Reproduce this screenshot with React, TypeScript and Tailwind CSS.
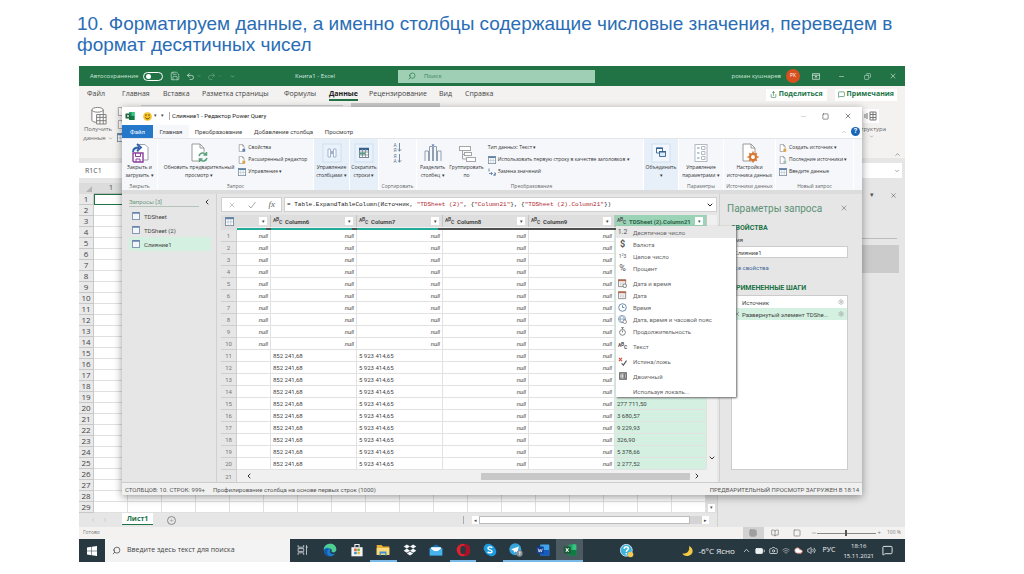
import React from 'react';
import {
  Battery, ChevronDown, ChevronLeft, ChevronRight, ChevronUp, Cloud, Camera, Minus, MessageSquare,
  Redo2, Save, Search, Settings, Share, Square, Undo2, Volume2, Wifi, X, Copy, Grid3x3, BookOpen,
} from 'lucide-react';

const excelTabs = [
  { label: 'Файл', width: 'w-[35px]' },
  { label: 'Главная', width: 'w-[41px]' },
  { label: 'Вставка', width: 'w-[39px]' },
  { label: 'Разметка страницы', width: 'w-[82px]' },
  { label: 'Формулы', width: 'w-[45px]' },
  { label: 'Данные', width: 'w-[40px]' },
  { label: 'Рецензирование', width: 'w-[70px]' },
  { label: 'Вид', width: 'w-[26px]' },
  { label: 'Справка', width: 'w-[42px]' },
];

const queries = ['TDSheet', 'TDSheet (2)', 'Слияние1'];

const columns = ['', 'Column6', 'Column7', 'Column8', 'Column9', 'TDSheet (2).Column21'];

const lastValues: Record<number, string> = {
  15: '277 711,50',
  16: '3 680,57',
  17: '9 229,93',
  18: '326,90',
  19: '5 378,66',
  20: '2 277,52',
};

const rowNumbers = Array.from({ length: 20 }, (_, i) => i + 1);
const sheetRows = Array.from({ length: 29 }, (_, i) => i + 1);
const sheetColumns = Array.from({ length: 18 }, (_, i) => i + 1);

function TableIcon({ className = '' }: { className?: string }) {
  return (
    <svg viewBox="0 0 10 10" className={`shrink-0 ${className}`} fill="none">
      <rect x="0.5" y="0.5" width="9" height="9" fill="#fff" stroke="#7b8b9c" />
      <path d="M0.5 1.5h9" stroke="#5f82a8" strokeWidth="2" />
      <path d="M3.5 2.5v7M6.5 2.5v7M1 5.5h8" stroke="#a9b9c9" strokeWidth="0.7" />
    </svg>
  );
}

function QueryIcon() {
  return (
    <svg viewBox="0 0 8 8" className="size-2 shrink-0" fill="none">
      <rect x="0.5" y="0.5" width="7" height="7" fill="#f2f5f9" stroke="#8699b3" />
      <path d="M0.5 1h7" stroke="#5c7ba6" strokeWidth="1.4" />
    </svg>
  );
}

function PageIcon({ accent = '#e0a33a', className = '' }: { accent?: string; className?: string }) {
  return (
    <svg viewBox="0 0 10 10" className={`shrink-0 ${className}`} fill="none">
      <path d="M1.5 0.5h4l2 2v7h-6z" fill="#fff" stroke="#8a8a8a" strokeWidth="0.8" />
      <path d="M5.5 0.5v2h2" stroke="#8a8a8a" strokeWidth="0.8" />
      <rect x="5.5" y="6" width="3.5" height="3.5" fill={accent} />
    </svg>
  );
}

function TypeIcon() {
  return (
    <span aria-hidden="true" className="relative inline-block h-2 w-[9px] text-[5px] leading-[6px] font-bold text-[#555]">
      <span className="absolute top-0 left-0">A</span>
      <span className="absolute -top-px left-[3px]">B</span>
      <span className="absolute top-[2px] left-[6px]">C</span>
    </span>
  );
}

function CloseLoadIcon() {
  return (
    <svg viewBox="0 0 20 20" className="size-5" fill="none">
      <path d="M8 1.500h7l3 3V17H8z" fill="#fff" stroke="#9aa3ad" />
      <path d="M3 9c0-3 2-4.500 6-4.500M7 1l4 3.500L7 8" stroke="#2f5ea8" strokeWidth="1.800" />
      <path d="M3 10h10v9H4l-1-1z" fill="#fff" stroke="#8a3f9a" strokeWidth="1.400" />
      <path d="M5.500 10v3.500h5V10M6 19v-3h4v3" stroke="#8a3f9a" />
    </svg>
  );
}

function RefreshPageIcon() {
  return (
    <svg viewBox="0 0 20 20" className="size-5" fill="none">
      <path d="M3 1h8l4 4v13H3z" fill="#fff" stroke="#9a9a9a" />
      <path d="M11 1v4h4" stroke="#9a9a9a" />
      <circle cx="14" cy="14" r="5.500" fill="#f5f7fa" />
      <path d="M10 13a4 4 0 0 1 7-1.500M18 15a4 4 0 0 1-7 1.500M17.500 9v3h-3M10.500 19v-3h3" stroke="#5ba17c" strokeWidth="1.500" />
    </svg>
  );
}

function ManageColumnsIcon() {
  return (
    <svg viewBox="0 0 20 20" className="size-5" fill="none">
      <rect x="1" y="1" width="18" height="18" fill="#e9f1fa" stroke="#cfdff0" />
      <path d="M6 6h2.500v8H6zM11.500 6H14v8h-2.500z" fill="#fff" stroke="#9fb3ce" />
      <path d="M8.500 8h3v3h-3z" fill="#9fb3ce" />
    </svg>
  );
}

function ReduceRowsIcon() {
  return (
    <svg viewBox="0 0 20 20" className="size-5" fill="none">
      <rect x="1" y="1" width="18" height="18" fill="#e9f1fa" stroke="#cfdff0" />
      <rect x="5.500" y="5.500" width="9" height="9" fill="#fff" stroke="#7b8794" />
      <path d="M5 6h10" stroke="#35618f" strokeWidth="2.500" />
      <path d="M5.500 9h9M5.500 12h9M8.500 6v8M11.500 6v8" stroke="#7b8794" strokeWidth="0.800" />
      <path d="M6 9.500h5v2H6z" fill="#4da07a" />
    </svg>
  );
}

function SortIcon({ letters }: { letters: string }) {
  return (
    <span className="flex h-[11px] items-center text-[#5b7290]">
      <span className="flex flex-col text-[5px] leading-[5px]">
        <span>{letters[0]}</span>
        <span>{letters[1]}</span>
      </span>
      <svg viewBox="0 0 5 10" className="h-[9px] w-[5px]" fill="none" stroke="currentColor" strokeWidth="0.900">
        <path d="M2.500 0v9M0.500 7l2 2 2-2" />
      </svg>
    </span>
  );
}

function SplitIcon() {
  return (
    <svg viewBox="0 0 20 20" className="size-5" fill="none" stroke="#8fa0b3">
      <path d="M2 18V8h3.500v10M14.500 18V8H18v10M6.500 18V3.500h3V18M10.500 18V3.500h3V18" />
      <path d="M8.500 1.500L10 3.500l1.500-2z" fill="#3d6ea8" stroke="none" />
    </svg>
  );
}

function GroupIcon() {
  return (
    <svg viewBox="0 0 20 20" className="size-5" fill="#fff" stroke="#a6a6a6">
      <path d="M5.500 7v9H10M5.500 11.500H8" fill="none" />
      <rect x="2.500" y="3.500" width="11" height="4" />
      <rect x="7.500" y="9.500" width="7" height="3" />
      <rect x="9.500" y="14.500" width="9" height="4" />
    </svg>
  );
}

function CombineIcon() {
  return (
    <svg viewBox="0 0 20 20" className="size-5" fill="none">
      <rect x="1" y="1" width="18" height="18" fill="#f1f7fd" stroke="#cfdff0" />
      <path d="M5.500 5h6v5h-6z" fill="#fff" stroke="#4b7099" />
      <path d="M5 5.300h7" stroke="#35618f" strokeWidth="1.400" />
      <path d="M8.500 8.500h6v5h-6z" fill="#dcebf7" stroke="#4b7099" />
      <path d="M8 8.800h7" stroke="#35618f" strokeWidth="1.400" />
    </svg>
  );
}

function ParametersIcon() {
  return (
    <svg viewBox="0 0 20 20" className="size-5" fill="#fff" stroke="#b3bac2">
      <rect x="4" y="1.500" width="12" height="17" />
      <path d="M6 5h2.500M6 10h2.500M6 15h2.500" stroke="#6b8fb8" />
      <path d="M10.500 3.500h3.500v3h-3.500zM10.500 8.500h3.500v3h-3.500zM10.500 13.500h3.500v3h-3.500z" />
    </svg>
  );
}

function SourceSettingsIcon() {
  return (
    <svg viewBox="0 0 20 20" className="size-5" fill="none">
      <path d="M4 1h8l4 4v13H4z" fill="#fff" stroke="#9a9a9a" />
      <path d="M12 1v4h4" stroke="#9a9a9a" />
      <circle cx="14" cy="14" r="3" fill="#fff" stroke="#d8742c" strokeWidth="2" />
      <path d="M14 8.500v2M14 17.500v2M8.500 14h2M17.500 14h2M10.200 10.200l1.400 1.400M16.400 16.400l1.400 1.400M10.200 17.800l1.400-1.400M16.400 11.600l1.400-1.400" stroke="#d8742c" strokeWidth="1.500" />
    </svg>
  );
}

function ExcelLogo({ className = '' }: { className?: string }) {
  return (
    <svg viewBox="0 0 20 20" className={className} fill="none">
      <rect x="8" y="2" width="11" height="16" rx="1" fill="#21a366" />
      <path d="M13.500 2H19v8h-5.500z" fill="#33c481" />
      <path d="M8 10h11v8H8z" fill="#107c41" />
      <rect x="1" y="5" width="10" height="10" rx="1" fill="#185c37" />
      <path d="M4 7.500l4 5M8 7.500l-4 5" stroke="#fff" strokeWidth="1.500" />
    </svg>
  );
}

interface BigButtonProps {
  icon: React.ReactNode;
  lines: string[];
}

function BigButton({ icon, lines }: BigButtonProps) {
  return (
    <button className="flex h-10 flex-col items-center pt-px leading-2 whitespace-nowrap">
      {icon}
      {lines.map((line) => (
        <span key={line}>{line}</span>
      ))}
    </button>
  );
}

function SmallButton({ icon, label }: { icon?: React.ReactNode; label: string }) {
  return (
    <button className="flex h-3 items-center gap-[2px] whitespace-nowrap">
      {icon}
      {label}
    </button>
  );
}

interface GroupProps {
  label?: string;
  className: string;
  children: React.ReactNode;
}

function Group({ label, className, children }: GroupProps) {
  return (
    <div className={`flex h-full flex-col border-r border-white pt-[3px] ${className}`}>
      <div className="flex h-10 items-start justify-center gap-1">{children}</div>
      <div className="text-center leading-2 whitespace-nowrap text-[#666]">{label}</div>
    </div>
  );
}

function ExcelHeader() {
  return (
    <>
      <header className="flex h-5 items-center bg-[#217346] text-[6px] text-[#cfe5d8]">
        <label htmlFor="autosave" className="ml-[11px] w-[50px]">Автосохранение</label>
        <span className="relative ml-[3px] flex">
          <input id="autosave" type="checkbox" className="h-[9px] w-5 appearance-none rounded-full border border-white" />
          <span className="pointer-events-none absolute top-[2px] left-[3px] size-[5px] rounded-full bg-white" />
        </span>
        <Save className="ml-[7px] size-[10px]" strokeWidth={1.5} />
        <Undo2 className="ml-[6px] size-[9px]" />
        <ChevronDown className="ml-[2px] size-1" />
        <Redo2 className="ml-[6px] size-[9px] opacity-40" />
        <ChevronDown className="ml-[2px] size-1 opacity-50" />
        <ChevronDown className="ml-2 size-[5px]" />
        <h2 className="ml-[60px] w-[103px] text-[#dcece3]">Книга1 - Excel</h2>
        <label className="flex h-[13px] w-[197px] items-center bg-[#9fd0b5] pl-[10px] text-[#217346]">
          <Search className="size-2 -scale-x-100" />
          <input aria-label="Поиск" placeholder="Поиск" className="ml-2 w-20 placeholder:text-[#3c7f5b]" />
        </label>
        <span className="ml-auto">роман кушнарев</span>
        <span className="ml-[5px] grid size-[14px] place-items-center rounded-full bg-[#d8501f] text-[5px] text-white">РК</span>
        <div className="ml-3 flex w-[93px] items-center justify-between pr-2">
          <svg viewBox="0 0 10 8" className="h-[7px] w-2" fill="none" stroke="currentColor">
            <path d="M0.500 0.500h9v7h-9zM0.500 2.500h9M5 6.500v-3M3.500 5L5 3.500 6.500 5" />
          </svg>
          <Minus className="size-[7px]" />
          <Copy className="size-[7px] -scale-x-100" />
          <X className="size-2" />
        </div>
      </header>
      <nav className="flex h-[17px] items-center bg-[#f3f2f1] pl-2 text-[7px] text-[#444]">
        {excelTabs.map((tab) => (
          <button key={tab.label} className={`h-full shrink-0 text-left whitespace-nowrap ${tab.width}`}>
            <span className={tab.label === 'Данные' ? 'border-b-2 border-[#217346] pb-px font-bold text-[#222]' : ''}>
              {tab.label}
            </span>
          </button>
        ))}
        <button className="ml-auto flex h-3 items-center gap-[2px] bg-white px-1 font-bold text-[#217346]">
          <Share className="size-[7px]" />
          Поделиться
        </button>
        <button className="mx-2 flex h-3 items-center gap-[2px] bg-white px-[3px] font-bold text-[#217346]">
          <MessageSquare className="size-[7px]" />
          Примечания
        </button>
      </nav>
      <div className="flex h-[55px] items-start bg-[#f3f2f1] text-[6px] text-[#666]">
        <button className="mt-[3px] flex w-[38px] flex-col items-center leading-[9px]">
          <svg viewBox="0 0 18 20" className="h-[19px] w-[17px]" fill="#fff" stroke="#777">
            <path d="M2 4v11c0 3 12 3 12 0V4" />
            <ellipse cx="8" cy="4" rx="6" ry="2.500" />
            <path d="M7 9h10v10H7zM7 12h10M7 15.500h10M10.500 9v10M14 9v10" />
          </svg>
          Получить
          <span className="flex items-center">данные <ChevronDown className="ml-[2px] size-[5px]" /></span>
        </button>
        <div className="flex flex-col gap-1 pt-1">
          <PageIcon className="size-[9px]" accent="#fff" />
          <PageIcon className="size-[9px]" accent="#3f86c0" />
          <TableIcon className="size-[9px]" />
        </div>
        <div className="ml-[15px] h-[3px] w-[202px] border-b border-[#ccc]" />
        <div className="ml-2 h-[5px] w-[89px] bg-[#c9c9c9]" />
        <button className="mt-[6px] ml-auto flex flex-col items-center">
          <svg viewBox="0 0 16 14" className="h-[14px] w-4 bg-white" fill="none" stroke="#777">
            <path d="M7 3h6v8H7zM7 5.500h6M7 8.500h6M10 3v8M2 5v4M4 4v6" />
          </svg>
          <span className="mt-[2px]">Структура</span>
          <ChevronDown className="size-[5px]" />
        </button>
        <ChevronUp className="mr-1 ml-2 size-[7px] self-end" />
      </div>
      <div className="flex h-[25px] items-center gap-[70px] bg-[#e6e6e6] text-[7px] text-[#555]">
        <input aria-label="Имя ячейки" defaultValue="R1C1" className="h-[15px] w-14 bg-white pl-[6px]" />
        <div className="mr-[3px] flex h-[15px] flex-1 items-center justify-end bg-white pr-[2px]">
          <ChevronDown className="size-[6px]" />
        </div>
      </div>
    </>
  );
}

function Sheet() {
  return (
    <div className="flex flex-1 bg-[#e6e6e6]">
      <div className="min-w-0 flex-1">
        <div className="flex">
          <div className="min-w-0 flex-1">
            <table className="w-full table-fixed border-separate border-spacing-0 bg-white text-[8px] leading-[10px] text-[#444]">
              <thead>
                <tr className="bg-[#dcdcdc]">
                  <th className="h-[11px] w-[15px] p-0">
                    <svg viewBox="0 0 6 6" className="ml-auto mr-[2px] size-[6px]"><path d="M6 0v6H0z" fill="#b5b5b5" /></svg>
                  </th>
                  {sheetColumns.map((n) => (
                    <th key={n} className="border-b border-[#bbb] p-0 text-[7px] font-normal">{n === 1 && n}</th>
                  ))}
                </tr>
              </thead>
              <tbody>
                {sheetRows.map((n) => (
                  <tr key={n}>
                    <td className="h-[11px] border-r border-b border-[#c8c8c8] bg-[#e9e9e9] p-0 text-center">{n}</td>
                    {sheetColumns.map((c) => (
                      <td key={c} className={n === 1 && c === 1 ? 'border border-[#217346] p-0' : 'border-r border-b border-[#e0e0e0] p-0'} />
                    ))}
                  </tr>
                ))}
              </tbody>
            </table>
          </div>
          <div className="flex w-[11px] flex-col justify-end bg-[#dedede]">
            <button aria-label="Вниз" className="mx-[2px] mb-px grid h-2 place-items-center bg-white text-[5px] text-[#555]">▾</button>
          </div>
        </div>
        <div className="flex h-[14px] items-center text-[7px] text-[#999]">
          <ChevronLeft className="ml-[11px] size-[6px] opacity-60" />
          <ChevronRight className="ml-[6px] size-[6px] opacity-60" />
          <button className="ml-[14px] h-3 w-[31px] self-start border-b border-[#217346] bg-white leading-3 font-bold text-[#217346]">Лист1</button>
          <button aria-label="Новый лист" className="ml-[14px] grid size-[9px] place-items-center rounded-full border border-[#888] text-[7px] leading-[7px]">+</button>
          <span className="ml-auto h-2 border-l border-[#aaa]" />
          <div className="mr-2 ml-2 flex h-2 w-[237px] items-center justify-between bg-[#d4d4d4] text-[5px] text-[#444]">
            <span className="h-2 w-[7px] bg-white text-center leading-2">◂</span>
            <span className="mr-3 h-2 flex-1 border border-[#bbb] bg-white" />
            <span className="h-2 w-[7px] bg-white text-center leading-2">▸</span>
          </div>
        </div>
      </div>
      <aside className="w-[188px] border-l border-[#d0d0d0]">
        <div className="flex h-6 items-center justify-end gap-4 pr-2 text-[#555]">
          <span className="text-[7px]">▾</span>
          <X className="size-[7px]" />
        </div>
        <div className="mr-2 h-8 border-b border-[#bbb]" />
        <div className="mt-[6px] mr-[6px] h-7 bg-[#cbcbcb]" />
      </aside>
    </div>
  );
}

function PowerQueryRibbon() {
  return (
    <div className="flex h-[52px] border-t border-[#e3e7ec] bg-[#f5f7fa] font-['Open_Sans',sans-serif] text-[5px] text-[#333]">
      <Group label="Закрыть" className="w-9">
        <BigButton icon={<CloseLoadIcon />} lines={['Закрыть и', 'загрузить ▾']} />
      </Group>
      <Group label="Запрос" className="w-[156px]">
        <BigButton icon={<RefreshPageIcon />} lines={['Обновить предварительный', 'просмотр ▾']} />
        <div>
          <SmallButton icon={<PageIcon accent="#5b82ad" className="size-2" />} label="Свойства" />
          <SmallButton icon={<PageIcon className="size-2" />} label="Расширенный редактор" />
          <SmallButton icon={<TableIcon className="size-2" />} label="Управление ▾" />
        </div>
      </Group>
      <Group className="w-9 bg-[#e7eff8]">
        <BigButton icon={<ManageColumnsIcon />} lines={['Управление', 'столбцами ▾']} />
      </Group>
      <Group className="w-[29px] bg-[#e7eff8]">
        <BigButton icon={<ReduceRowsIcon />} lines={['Сократить', 'строки ▾']} />
      </Group>
      <Group label="Сортировать" className="w-[38px]">
        <div className="flex flex-col">
          <SortIcon letters="АЯ" />
          <SortIcon letters="ЯА" />
        </div>
      </Group>
      <Group label="Преобразование" className="flex-1 pl-[3px]">
        <BigButton icon={<SplitIcon />} lines={['Разделить', 'столбец ▾']} />
        <BigButton icon={<GroupIcon />} lines={['Группировать', 'по']} />
        <div className="flex-1">
          <SmallButton label="Тип данных: Текст ▾" />
          <SmallButton icon={<TableIcon className="size-2" />} label="Использовать первую строку в качестве заголовков ▾" />
          <SmallButton
            icon={
              <svg viewBox="0 0 8 8" className="size-2" fill="none" stroke="#4b7099">
                <path d="M1 0.500v3M1 5.500h3M3 4l1.500 1.500L3 7M6 5h1.500v1.500H6V8h2" strokeWidth="0.800" />
              </svg>
            }
            label="Замена значений"
          />
        </div>
      </Group>
      <Group className="w-[35px] bg-[#e7eff8]">
        <BigButton icon={<CombineIcon />} lines={['Объединить', '▾']} />
      </Group>
      <Group label="Параметры" className="w-[45px]">
        <BigButton icon={<ParametersIcon />} lines={['Управление', 'параметрами ▾']} />
      </Group>
      <Group label="Источники данных" className="w-[52px]">
        <BigButton icon={<SourceSettingsIcon />} lines={['Настройки', 'источника данных']} />
      </Group>
      <Group label="Новый запрос" className="mr-2 w-[78px]">
        <div className="flex-1 pl-[3px]">
          <SmallButton icon={<PageIcon className="size-2" />} label="Создать источник ▾" />
          <SmallButton icon={<PageIcon accent="#9ec3b0" className="size-2" />} label="Последние источники ▾" />
          <SmallButton icon={<TableIcon className="size-2" />} label="Введите данные" />
        </div>
      </Group>
    </div>
  );
}

function CalendarIcon({ clock = false }: { clock?: boolean }) {
  return (
    <svg viewBox="0 0 10 10" className="size-[9px]" fill="none">
      <path d="M0.500 1h8v7.500h-8z" fill="#fff" stroke="#888" />
      <path d="M0 1.500h9" stroke="#b0694f" strokeWidth="2" />
      <path d="M2 4.500h5M2 6.500h5" stroke="#888" strokeDasharray="1 1" />
      {clock && <circle cx="7.500" cy="7.500" r="2" fill="#fff" stroke="#777" />}
    </svg>
  );
}

const typeMenu: { label: string; icon: React.ReactNode; separated?: boolean }[] = [
  { label: 'Десятичное число', icon: <span className="text-[7px]">1.2</span> },
  { label: 'Валюта', icon: <b className="text-[9px]">$</b> },
  { label: 'Целое число', icon: <span className="text-[5px]">1<sup>2</sup>3</span> },
  { label: 'Процент', icon: <span className="text-[9px]">%</span> },
  { label: 'Дата и время', icon: <CalendarIcon clock />, separated: true },
  { label: 'Дата', icon: <CalendarIcon /> },
  {
    label: 'Время',
    icon: (
      <svg viewBox="0 0 10 10" className="size-[9px]" fill="#fff" stroke="#5f81a5">
        <circle cx="5" cy="5" r="4.200" />
        <path d="M5 2.500V5h2" />
      </svg>
    ),
  },
  {
    label: 'Дата, время и часовой пояс',
    icon: (
      <svg viewBox="0 0 10 10" className="size-[9px]" fill="none" stroke="#6f8eae" strokeWidth="0.800">
        <circle cx="4.500" cy="4.500" r="4" />
        <path d="M0.500 4.500h8M4.500 0.500c-3 2-3 6 0 8M4.500 0.500c3 2 3 6 0 8" />
        <circle cx="7.500" cy="7.500" r="2" fill="#fff" stroke="#777" />
      </svg>
    ),
  },
  {
    label: 'Продолжительность',
    icon: (
      <svg viewBox="0 0 10 10" className="size-[9px]" fill="none" stroke="#777">
        <circle cx="5" cy="6" r="3.200" />
        <path d="M5 6V4M5 2.500V1M3.500 0.700h3" />
      </svg>
    ),
  },
  { label: 'Текст', icon: <TypeIcon />, separated: true },
  {
    label: 'Истина/ложь',
    separated: true,
    icon: (
      <svg viewBox="0 0 10 10" className="size-[9px]" fill="none" strokeWidth="1.300">
        <path d="M1 1l3.500 3.500M4.500 1L1 4.500" stroke="#d0503a" />
        <path d="M4 7l2 2 3.500-5" stroke="#555" />
      </svg>
    ),
  },
  {
    label: 'Двоичный',
    separated: true,
    icon: (
      <svg viewBox="0 0 10 10" className="size-2" fill="#eee" stroke="#555">
        <path d="M1 1h8v8H1z" strokeWidth="1.500" />
        <path d="M3.500 2.500v2M3.500 5.500v2M6 2.500h1v2H6zM6 5.500h1v2H6z" />
      </svg>
    ),
  },
  { label: 'Используя локаль...', icon: null, separated: true },
];

function TypeMenu() {
  return (
    <ul className="absolute top-[11px] left-[395px] z-10 w-[120px] bg-white text-[6px] text-[#666] shadow-[1px_1px_2px_#666]">
      {typeMenu.map((item, i) => (
        <li key={item.label} className={item.separated ? 'pt-[3px]' : ''}>
          <button className={`flex h-3 w-full items-center whitespace-nowrap ${i === 0 ? 'bg-[#e8e8e8]' : ''}`}>
            <span className="grid w-[13px] place-items-center leading-[9px] text-[#555]">{item.icon}</span>
            <span className="ml-1">{item.label}</span>
          </button>
        </li>
      ))}
    </ul>
  );
}

function cellText(row: number, column: number) {
  if (column === 5) return lastValues[row] ?? '';
  if (column > 2 || row <= 10) return 'null';
  return ['', '852 241,68', '5 923 414,65'][column];
}

function DataGrid() {
  return (
    <div className="relative flex flex-1 bg-[#f0f0f0]">
      <table className="flex-1 table-fixed border-separate border-spacing-0 text-[6px] leading-[11px] text-[#444]">
        <colgroup>
          <col className="w-4" />
          <col className="w-[34px]" />
          <col className="w-[86px]" />
          <col className="w-[86px]" />
          <col className="w-[86px]" />
          <col className="w-[86px]" />
          <col />
        </colgroup>
        <thead>
          <tr className="bg-[#dedede]">
            <th className="h-3 p-0"><TableIcon className="mx-auto size-[9px]" /></th>
            {columns.map((name, i) => (
              <th key={name} className={`border-r border-[#c4c4c4] p-0 font-bold ${i === 5 ? 'bg-[#9bd3b6] text-[#2d6349]' : ''}`}>
                <div className="flex items-center pr-[3px] pl-[2px] whitespace-nowrap">
                  {name && <TypeIcon />}
                  <span className="ml-[3px]">{name}</span>
                  <button aria-label={`Фильтр ${name}`} className="ml-auto size-2 bg-white text-[5px] leading-2 font-normal">▾</button>
                </div>
              </th>
            ))}
          </tr>
          <tr>
            <td className="h-[3px] bg-[#dedede] p-0" />
            {columns.map((name, i) => (
              <td key={name} className="bg-[#f0f0f0] p-0">
                <div className={`flex h-[2px] justify-end ${i < 3 ? 'bg-[#21ab98]' : 'bg-[#505050]'}`}>
                  <span className="w-[5px] bg-[#505050]" />
                </div>
              </td>
            ))}
          </tr>
        </thead>
        <tbody>
          {rowNumbers.map((row) => (
            <tr key={row} className="bg-white">
              <td className="h-3 border-r border-b border-[#cfcfcf] bg-[#e6e6e6] p-0 text-center text-[#777]">{row}</td>
              {columns.map((name, i) => {
                const text = cellText(row, i);
                return (
                  <td
                    key={name}
                    className={`border-r border-b border-[#e2e2e2] px-[2px] py-0 ${text === 'null' ? 'text-right italic' : ''} ${i === 5 ? 'bg-[#d3f0e1]' : ''}`}
                  >
                    {text}
                  </td>
                );
              })}
            </tr>
          ))}
          <tr>
            <td className="h-3 border-r border-[#cfcfcf] bg-[#e6e6e6] p-0 text-center text-[#777]">21</td>
            <td colSpan={6} className="p-0">
              <div className="flex h-[10px] items-center pr-[6px] pl-2 text-[#333]">
                <ChevronLeft className="size-2" strokeWidth={3} />
                <span className="ml-auto h-[7px] w-[209px] bg-[#c8c8c8]" />
                <ChevronRight className="ml-[3px] size-2" strokeWidth={3} />
              </div>
            </td>
          </tr>
        </tbody>
      </table>
      <div className="flex w-[10px] flex-col items-center justify-end pb-5">
        <ChevronDown className="size-2 text-[#333]" strokeWidth={3} />
      </div>
      <TypeMenu />
    </div>
  );
}

function PowerQueryWindow() {
  return (
    <section className="absolute inset-x-[43px] top-[41px] flex h-[388px] flex-col bg-[#e6e6e6] font-[Roboto,sans-serif] text-[6px] text-[#444] shadow-[0_2px_8px_#0006]">
      <div className="flex h-[18px] items-center bg-white pl-[3px]">
        <ExcelLogo className="size-[10px]" />
        <svg viewBox="0 0 10 10" className="ml-2 size-[9px]">
          <circle cx="5" cy="5" r="4.800" fill="#f5c32c" />
          <path d="M3.300 2.500v2M6.700 2.500v2M2.500 6c1 2.200 4 2.200 5 0" stroke="#5b4100" fill="none" />
        </svg>
        <span className="ml-[2px] text-[5px]">▾</span>
        <span className="ml-1 text-[5px]">▾</span>
        <h2 className="ml-[5px] border-l border-[#aaa] pl-[2px] leading-2 text-[#222]">Слияние1 - Редактор Power Query</h2>
        <div className="ml-auto flex w-[62px] items-center justify-between pr-[10px]">
          <Minus className="size-[7px] text-[#bbb]" />
          <Square className="size-[7px]" />
          <X className="size-2" />
        </div>
      </div>
      <div className="flex h-[13px] items-center bg-white">
        <button className="h-full w-[31px] bg-[#2477c9] text-white">Файл</button>
        <button className="h-full w-9 bg-[#f5f7fa]">Главная</button>
        <button className="w-[59px]">Преобразование</button>
        <button className="w-[71px]">Добавление столбца</button>
        <button className="w-10">Просмотр</button>
        <ChevronUp className="ml-auto size-[6px] text-[#999]" />
        <button className="mr-[2px] ml-1 size-[9px] rounded-full bg-[#1766b8] text-[7px] leading-[9px] font-bold text-white">?</button>
      </div>
      <PowerQueryRibbon />
      <div className="flex flex-1 border-t-4 border-[#dcdcdc]">
        <aside className="w-[95px] border-r border-[#d0d0d0] pt-1 pr-[5px] pl-[7px]">
          <h3 className="flex h-2 items-center justify-between text-[6px] text-[#6c9a82]">
            <span className="w-[70px] border-b border-[#b5c4bb] leading-2">Запросы [3]</span>
            <ChevronLeft className="size-2 text-[#333]" strokeWidth={3} />
          </h3>
          <ul className="mt-[3px]">
            {queries.map((query) => (
              <li key={query} className={query === 'Слияние1' ? 'bg-[#d3f0e1]' : ''}>
                <button className="flex h-[14px] items-center gap-1 pl-[3px]">
                  <QueryIcon />
                  {query}
                </button>
              </li>
            ))}
          </ul>
        </aside>
        <div className="ml-1 flex min-w-0 flex-1 flex-col">
          <div className="flex h-[21px] items-center gap-[2px]">
            <div className="flex h-[15px] w-[61px] items-center justify-around border border-[#d0d0d0] bg-white text-[#aaa]">
              <X className="size-2" />
              <svg viewBox="0 0 8 8" className="size-2" fill="none" stroke="currentColor"><path d="M0.500 4.500l2.500 2.500L7.500 1" /></svg>
              <i className="font-[Liberation_Serif,serif] text-[9px] text-[#666]">fx</i>
            </div>
            <div className="flex h-[15px] flex-1 items-center border border-[#d0d0d0] bg-white px-[2px] font-[Liberation_Mono,monospace] whitespace-nowrap text-[#222]">
              <div role="textbox" aria-label="Формула" contentEditable suppressContentEditableWarning>
                = Table.ExpandTableColumn(Источник, <span className="text-[#b0282e]">"TDSheet (2)"</span>, {'{'}
                <span className="text-[#b0282e]">"Column21"</span>{'}'}, {'{'}
                <span className="text-[#b0282e]">"TDSheet (2).Column21"</span>{'})'}
              </div>
              <ChevronDown className="ml-auto size-2" strokeWidth={3} />
            </div>
          </div>
          <DataGrid />
        </div>
        <aside className="ml-[2px] flex w-[143px] flex-col border-l border-[#d0d0d0] pr-[14px] pl-[7px]">
          <div className="flex h-7 items-center justify-between text-[10px] text-[#5c9177]">
            Параметры запроса
            <X className="size-2 text-[#777]" />
          </div>
          <div className="flex flex-1 flex-col pb-3 pl-1">
            <h3 className="text-[7px] leading-3 font-bold text-[#217346]">СВОЙСТВА</h3>
            <label htmlFor="query-name" className="leading-3">Имя</label>
            <input id="query-name" defaultValue="Слияние1" className="h-3 border border-[#ccc] bg-white px-[2px]" />
            <a href="#properties" className="mt-1 leading-3 text-[#44699c]">Все свойства</a>
            <h3 className="mt-2 mb-px text-[7px] leading-3 font-bold text-[#217346]">ПРИМЕНЕННЫЕ ШАГИ</h3>
            <ul className="flex-1 border border-[#ccc] bg-white">
              <li className="flex h-3 items-center justify-between pr-[3px] pl-[10px]">
                Источник
                <Settings className="size-[6px] text-[#999]" />
              </li>
              <li className="flex h-3 items-center bg-[#d3f0e1] pr-[3px] pl-[2px] whitespace-nowrap">
                <X className="mr-[2px] size-[6px]" />
                Развернутый элемент TDShe...
                <Settings className="ml-auto size-[6px] text-[#999]" />
              </li>
            </ul>
          </div>
        </aside>
      </div>
      <footer className="flex h-[13px] items-center gap-2 border-t border-[#ccc] bg-[#f0f0f0] px-[3px] text-[#555]">
        <span>СТОЛБЦОВ: 10. СТРОК: 999+</span>
        <span>Профилирование столбца на основе первых строк (1000)</span>
        <span className="ml-auto">ПРЕДВАРИТЕЛЬНЫЙ ПРОСМОТР ЗАГРУЖЕН В 18:14</span>
      </footer>
    </section>
  );
}

const apps = [
  {
    name: 'Представление задач',
    icon: <path d="M3 3v3h8V3M3 17v-3h8v3M3 8h8v4H3zM15 3v14M14 6h3" fill="none" stroke="#c4cbce" strokeWidth="1.300" />,
  },
  {
    name: 'Edge',
    icon: (
      <>
        <circle cx="10" cy="10" r="9" fill="#1b7fd0" />
        <path d="M1 9C3-2 19-1 19 9c0 4-5 5-7 3 1-5-6-7-11-3z" fill="#4fcf8f" />
        <path d="M8 9c-4 3-2 9 3 10-7 1-11-5-9-9 2-2 4-2 6-1z" fill="#1359a5" />
        <path d="M11 9c1 2 0 3 0 4 2 3 6 2 8 0" fill="none" stroke="#283840" strokeWidth="2" />
      </>
    ),
  },
  {
    name: 'Магазин',
    icon: (
      <>
        <path d="M2 6h16v13H2z" fill="#f3f3f3" />
        <path d="M7 6V2h6v4" fill="none" stroke="#f3f3f3" strokeWidth="1.500" />
        <path d="M6 8h3.500v3.500H6z" fill="#e5532d" />
        <path d="M10.500 8H14v3.500h-3.500z" fill="#6dae35" />
        <path d="M6 12.500h3.500V16H6z" fill="#2f8cd8" />
        <path d="M10.500 12.500H14V16h-3.500z" fill="#f2b623" />
      </>
    ),
  },
  {
    name: 'Проводник',
    open: true,
    icon: (
      <>
        <path d="M1 3h7l2 2h9v12H1z" fill="#e7ae35" />
        <path d="M1 7h18v10H1z" fill="#fbdc7c" />
        <path d="M5 12h10v6h-2v-3H7v3H5z" fill="#3f93d2" />
      </>
    ),
  },
  { name: 'Dropbox', icon: <path d="M5.500 2L10 5l4.500-3L19 5l-4.500 3L19 11l-4.500 3L10 11l-4.500 3L1 11l4.500-3L1 5zM5.500 15l4.500-3 4.500 3-4.500 3zM10 5L5.500 8l4.500 3 4.500-3z" fill="#f3f7fa" fillRule="evenodd" /> },
  {
    name: 'Почта',
    icon: (
      <>
        <path d="M1 7l9-5 9 5v11H1z" fill="#1670b8" />
        <path d="M3 6h14v6H3z" fill="#fff" />
        <path d="M1 7l9 6 9-6v11H1z" fill="#46b3ec" />
      </>
    ),
  },
  {
    name: 'Opera',
    open: true,
    icon: (
      <>
        <circle cx="10" cy="10" r="9" fill="#e3202f" />
        <path d="M12 1a9 9 0 0 1 0 18z" fill="#a81224" />
        <ellipse cx="10" cy="10" rx="3.800" ry="6" fill="#283840" />
      </>
    ),
  },
  {
    name: 'Skype',
    icon: (
      <>
        <circle cx="7.500" cy="7.500" r="6.500" fill="#1d9be0" />
        <circle cx="12.500" cy="12.500" r="6.500" fill="#1d9be0" />
        <circle cx="10" cy="10" r="7.500" fill="#1d9be0" />
        <path d="M13 7c-1-2-6-2-6 .500s6 2 6 4.500-5 2.500-6.500.500" fill="none" stroke="#fff" strokeWidth="2" />
      </>
    ),
  },
  {
    name: 'Telegram',
    open: true,
    icon: (
      <>
        <circle cx="9" cy="9" r="8.500" fill="#35a5dc" />
        <path d="M3 9l11-4-2 9-3-2-2 2V11z" fill="#fff" />
        <circle cx="15" cy="15" r="4.500" fill="#8a9298" />
        <path d="M14 13h2l-1 4" fill="none" stroke="#fff" />
      </>
    ),
  },
  {
    name: 'Word',
    open: true,
    icon: (
      <>
        <rect x="6" y="2" width="13" height="16" rx="1" fill="#41a5ee" />
        <path d="M6 10h13v8H6z" fill="#185abd" />
        <rect x="1" y="5" width="10" height="10" rx="1" fill="#103f91" />
        <path d="M3 8l1.500 5L6 9l1.500 4L9 8" stroke="#fff" fill="none" />
      </>
    ),
  },
  { name: 'Excel', open: true, icon: null },
];

function Taskbar() {
  return (
    <footer className="flex h-[23px] items-center bg-[#283840] text-[7px] text-[#eef1f2]">
      <button aria-label="Пуск" className="grid w-[26px] place-items-center">
        <svg viewBox="0 0 10 10" className="size-[10px]" fill="#fff">
          <path d="M0 1.500L4.500 0.800v3.900H0zM5 0.700L10 0v4.700H5zM0 5.200h4.500v4L0 8.500zM5 5.200h5V10L5 9.300z" />
        </svg>
      </button>
      <label className="flex h-full w-[185px] items-center bg-[#f3f3f3] pl-[7px] text-[#444]">
        <Search className="size-[9px] -scale-x-100" />
        <input aria-label="Поиск в Windows" placeholder="Введите здесь текст для поиска" className="ml-[6px] flex-1 placeholder:text-[#444]" />
      </label>
      <div className="grid h-full w-[293px] grid-cols-11">
        {apps.map((app) => (
          <button
            key={app.name}
            aria-label={app.name}
            className={`grid place-items-center border-b-2 ${app.open ? 'border-[#7ab8e6]' : 'border-transparent'} ${app.name === 'Excel' ? 'bg-[#4c5b62]' : ''}`}
          >
            {app.icon ? <svg viewBox="0 0 20 20" className="size-[14px]">{app.icon}</svg> : <ExcelLogo className="size-[14px]" />}
          </button>
        ))}
      </div>
      <svg viewBox="0 0 20 20" className="ml-[37px] size-[14px]">
        <circle cx="9" cy="9" r="8.500" fill="#3bb3df" stroke="#fff" />
        <path d="M6 7c0-4 6-4 6-.500 0 2-3 2-3 5M9 13v2" fill="none" stroke="#fff" strokeWidth="2" />
        <circle cx="15" cy="15" r="4" fill="#f0c85a" />
      </svg>
      <svg viewBox="0 0 12 12" className="ml-auto size-3" fill="#f6c945">
        <path d="M7 1c5 2 5 9-1 10-3 .400-5-1-5.500-2.500C5 9 8 6 7 1z" />
      </svg>
      <span className="ml-1 w-11 text-[8px] whitespace-nowrap">-6°C Ясно</span>
      <div className="flex w-[74px] items-center justify-between">
        <ChevronUp className="size-[9px]" />
        <Battery className="size-[10px]" fill="currentColor" />
        <Camera className="size-[9px]" />
        <Wifi className="size-2 opacity-70" />
        <Cloud className="size-[9px] text-[#e58d84]" fill="#fff" />
        <Volume2 className="size-[9px]" />
      </div>
      <span className="ml-[6px]">РУС</span>
      <time className="ml-2 text-center text-[6px] leading-[10px]">18:16<br />15.11.2021</time>
      <MessageSquare className="mr-3 ml-2 size-[11px]" />
    </footer>
  );
}

export default function App() {
  return (
    <main className="min-h-screen bg-white font-['Open_Sans',sans-serif]">
      <h1 className="px-[77px] pt-[13px] pb-[11px] font-['Liberation_Sans',sans-serif] text-[19px] leading-[21px] text-[#2a6db5]">
        10. Форматируем данные, а именно столбцы содержащие числовые значения, переведем в формат десятичных чисел
      </h1>
      <div className="relative mr-[119px] ml-[79px] flex flex-col">
        <ExcelHeader />
        <Sheet />
        <div className="flex h-3 items-center bg-[#f3f2f1] text-[6px] text-[#777]">
          <span className="ml-1 text-[5px]">Готово</span>
          <span className="ml-auto grid h-full w-[21px] place-items-center bg-[#d2d2d2]"><Grid3x3 className="size-2" /></span>
          <BookOpen className="ml-[7px] size-2" />
          <Square className="mr-[10px] ml-[14px] size-2" />
          <Minus className="size-[6px]" />
          <input aria-label="Масштаб" type="range" className="h-px w-[59px] appearance-none bg-[#888] [&::-webkit-slider-thumb]:h-[6px] [&::-webkit-slider-thumb]:w-[2px] [&::-webkit-slider-thumb]:appearance-none [&::-webkit-slider-thumb]:bg-[#555]" />
          <span className="ml-[2px]">+</span>
          <span className="mr-1 ml-[6px] text-[5px]">100 %</span>
        </div>
        <Taskbar />
        <PowerQueryWindow />
      </div>
    </main>
  );
}
